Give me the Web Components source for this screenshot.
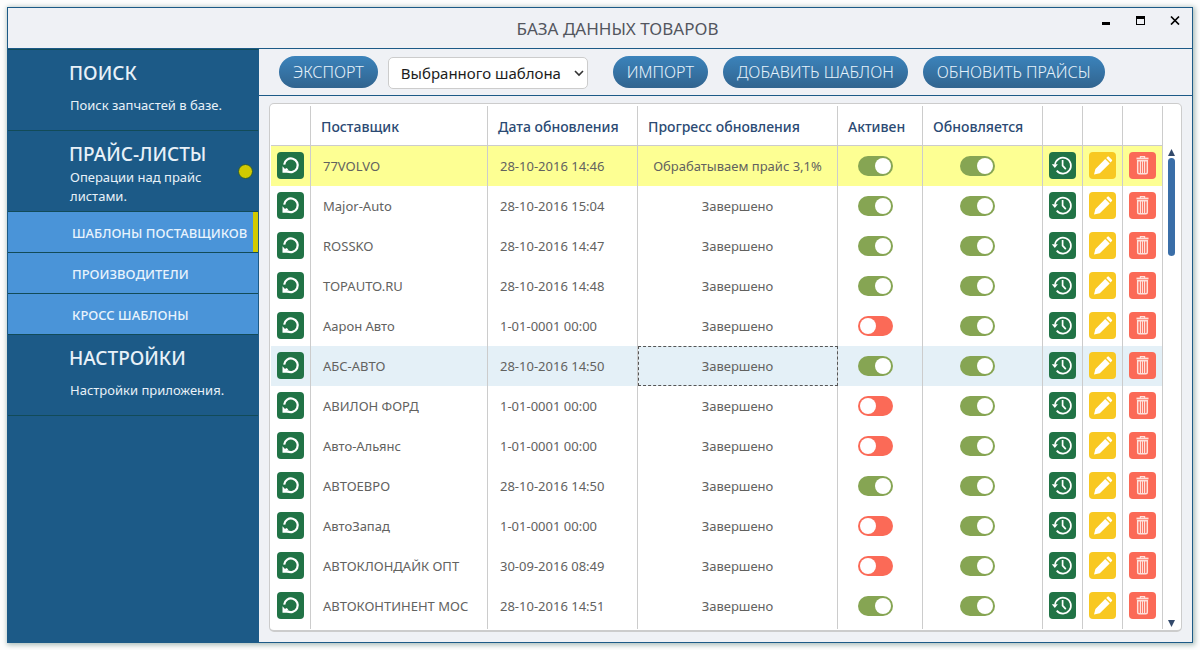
<!DOCTYPE html>
<html lang="ru">
<head>
<meta charset="utf-8">
<meta name="viewport" content="width=device-width, initial-scale=1">
<title>База данных товаров</title>
<style>
  html { background: #fdfdfd; }
  body { margin: 0; display: flex; min-height: 100vh; font-family: "Noto Sans", "Open Sans", sans-serif; }
</style>
</head>
<body>
<app-window>
  <window-title slot="title">БАЗА ДАННЫХ ТОВАРОВ</window-title>
  <side-nav slot="nav">
    <nav-section>ПОИСК<span slot="note">Поиск запчастей в базе.</span></nav-section>
    <nav-section active>ПРАЙС-ЛИСТЫ<span slot="note">Операции над прайс листами.</span></nav-section>
    <nav-item active>ШАБЛОНЫ ПОСТАВЩИКОВ</nav-item>
    <nav-item>ПРОИЗВОДИТЕЛИ</nav-item>
    <nav-item>КРОСС ШАБЛОНЫ</nav-item>
    <nav-section>НАСТРОЙКИ<span slot="note">Настройки приложения.</span></nav-section>
  </side-nav>
  <tool-bar slot="tools">
    <pill-button>ЭКСПОРТ</pill-button>
    <template-select></template-select>
    <pill-button>ИМПОРТ</pill-button>
    <pill-button>ДОБАВИТЬ ШАБЛОН</pill-button>
    <pill-button>ОБНОВИТЬ ПРАЙСЫ</pill-button>
  </tool-bar>
  <supplier-grid></supplier-grid>
</app-window>

<script>
const define = (name, markup, setup) => {
  const template = document.createElement('template');
  template.innerHTML = markup;
  customElements.define(name, class extends HTMLElement {
    constructor() {
      super();
      this.attachShadow({ mode: 'open' }).append(template.content.cloneNode(true));
    }
    connectedCallback() { if (setup) setup(this, this.shadowRoot); }
  });
};

define('app-window', `
  <style>
    :host { flex: 1; min-width: 0; margin: 7px; box-sizing: border-box; display: flex; flex-direction: column;
      border: 1px solid #1c5a87; background: #eff1f5; box-shadow: 1px 1px 5px 1px #a9bcb8; }
    .body { flex: 1; display: flex; }
    main { flex: 1; min-width: 0; display: flex; flex-direction: column; }
  </style>
  <slot name="title"></slot>
  <div class="body">
    <slot name="nav"></slot>
    <main><slot name="tools"></slot><slot></slot></main>
  </div>`);

define('window-title', `
  <style>
    :host { display: grid; grid-template-columns: 1fr auto 1fr; height: 40px; padding-left: 35px; border-bottom: 1px solid #1c5a87; }
    h1 { grid-column: 2; margin: 0; padding-top: 2px; font-size: 17px; font-weight: 400; line-height: 38px; color: #53565e; }
    .controls { display: flex; justify-content: flex-end; gap: 8px; padding: 0 4px; height: 24px; }
    button { width: 26px; height: 24px; padding: 0; border: 0; background: none; display: grid; place-items: center; }
  </style>
  <h1><slot></slot></h1>
  <div class="controls">
    <button aria-label="Свернуть"><svg width="10" height="10"><path d="M0 7h8v3H0z"/></svg></button>
    <button aria-label="Развернуть"><svg width="10" height="10"><path d="M0 1h9v9H0zM1 4v5h7V4z" fill-rule="evenodd"/></svg></button>
    <button aria-label="Закрыть"><svg width="10" height="10"><path d="M1 1.5l8 8M9 1.5l-8 8" stroke="#000" stroke-width="1.7"/></svg></button>
  </div>`);

define('side-nav', `
  <style>
    :host { display: flex; width: 250px; flex: none; background: #1c5a87; border-top: 1px solid #124b58; border-right: 1px solid #1c5a87; }
    nav { flex: 1; }
  </style>
  <nav aria-label="Разделы"><slot></slot></nav>`);

define('nav-section', `
  <style>
    :host { display: block; border-bottom: 1px solid #124b58; color: #e8f1f8; }
    a { box-sizing: border-box; height: 80px; padding: 4px 5px 4px 61px; display: flex; align-items: center; color: inherit; text-decoration: none; }
    .text { flex: 1; padding-top: 7px; }
    h2 { margin: 0; font-size: 19px; line-height: 24px; font-weight: 500; white-space: nowrap; }
    .note { display: flex; align-items: center; height: 41px; padding-left: 1px; font-size: 13px; line-height: 19px; }
    .dot { display: none; box-sizing: border-box; width: 15px; height: 15px; flex: none; border-radius: 50%; background: #d2ca00; border: 1px solid #2d5a35; }
    :host([active]) .dot { display: block; }
  </style>
  <a href="#">
    <div class="text"><h2><slot></slot></h2><div class="note"><slot name="note"></slot></div></div>
    <i class="dot"></i>
  </a>`);

define('nav-item', `
  <style>
    :host { display: block; border-bottom: 1px solid #124b58; background: #4a94d8; }
    a { box-sizing: border-box; display: block; height: 40px; padding-left: 64px; font-size: 13px; line-height: 42px;
      font-weight: 500; color: #e8f3fd; text-decoration: none; white-space: nowrap; border-right: 5px solid transparent; }
    :host([active]) a { border-color: #d2ca00; }
  </style>
  <a href="#"><slot></slot></a>`);

define('tool-bar', `
  <style>
    :host { display: flex; align-items: flex-start; gap: 15px; box-sizing: border-box; height: 47px; padding: 7px 20px 0; border-bottom: 1px solid #1c5a87; }
    ::slotted(template-select) { margin: 1px 10px 0 -5px; }
  </style>
  <slot></slot>`);

define('pill-button', `
  <style>
    :host { display: block; }
    button { height: 32px; padding: 0 14px; border: 0; border-radius: 16px; background: linear-gradient(#3b83bb, #31648f);
      color: #e6f2fb; font: 300 16px/32px "Noto Sans", "Open Sans", sans-serif; white-space: nowrap; }
  </style>
  <button type="button"><slot></slot></button>`);

define('template-select', `
  <style>
    :host { display: grid; width: 200px; }
    select, svg { grid-area: 1 / 1; }
    select { appearance: none; height: 32px; padding: 0 20px 0 12px; border: 1px solid #ccc; border-radius: 5px; background: #fff;
      color: #1c1c1c; font: 400 15px "Noto Sans", "Open Sans", sans-serif; }
    svg { justify-self: end; align-self: center; margin-right: 4px; pointer-events: none; }
  </style>
  <select aria-label="Объём экспорта"><option>Выбранного шаблона</option></select>
  <svg width="10" height="7"><path d="M1 1l4 4 4-4" fill="none" stroke="#333" stroke-width="1.6"/></svg>`);

define('toggle-switch', `
  <style>
    :host { display: block; height: 20px; }
    input { appearance: none; display: block; box-sizing: border-box; width: 35px; height: 20px; margin: 0 auto; padding: 2px; border-radius: 10px; background: #fb6a57; }
    input::before { content: ""; display: block; width: 16px; height: 16px; border-radius: 50%; background: #fff; }
    input:checked { background: #86a553; }
    input:checked::before { margin-left: auto; }
  </style>
  <input type="checkbox">`,
  (host, root) => {
    const box = root.querySelector('input');
    box.checked = host.hasAttribute('on');
    box.setAttribute('aria-label', host.getAttribute('label'));
  });

const icons = {
  refresh: ['#217346', 'Обновить', '<path d="M7.2 12.6A6.8 6.8 0 1 1 10 18.8" fill="none" stroke="#fff" stroke-width="2.2"/><path d="M5.5 14.3v6.4h6.6l-2-2 1.2-1.4-2-1.2-1.3 1z" fill="#fff"/>'],
  history: ['#217346', 'История', '<path d="M6 12.5A8 8 0 1 1 7.7 18.6" fill="none" stroke="#fff" stroke-width="1.7"/><path d="M2.8 12.2h6.1L5.8 16z" fill="#fff"/><path d="M13.6 8v5.7l3.2 3.4" fill="none" stroke="#fff" stroke-width="1.7"/>'],
  edit: ['#f8c822', 'Изменить', '<path d="M5 22.5l1.4-5.6L16.2 7l4.5 4.5-9.9 9.8zM17.2 6l1.3-1.3q.7-.7 1.4 0l3 3q.7.7 0 1.4l-1.3 1.4z" fill="#fff"/>'],
  remove: ['#fb6a57', 'Удалить', '<g fill="none" stroke="#ffe1dc"><path d="M7.5 6.5h12" stroke-width="1.8"/><path d="M11.4 6V4.6h4.2V6" stroke-width="1.2"/><path d="M8.7 8.7h9.6v11.5q0 1.5-1.4 1.5h-6.8q-1.4 0-1.4-1.5z" stroke-width="1.5"/><path d="M11.4 9v12M13.5 9v12M15.6 9v12" stroke-width="1.2"/></g>'],
};

define('icon-button', `
  <style>
    :host { display: block; height: 27px; }
    button { display: block; width: 27px; height: 27px; margin: 0 auto; padding: 0; border: 0; border-radius: 4px; }
    svg { display: block; }
  </style>
  <button type="button"></button>`,
  (host, root) => {
    const [color, label, shape] = icons[host.getAttribute('kind')];
    const button = root.querySelector('button');
    button.style.background = color;
    button.setAttribute('aria-label', label);
    button.innerHTML = `<svg width="27" height="27" viewBox="0 0 27 27">${shape}</svg>`;
  });

define('scroll-rail', `
  <style>
    :host { display: flex; flex-direction: column; align-items: center; width: 17px; flex: none; }
    button { width: 7px; height: 9px; padding: 0; border: 0; background: none; display: grid; place-items: center; }
    .track { flex: 1; }
    .thumb { width: 7px; height: 98px; margin-top: 1px; border-radius: 4px; background: #3a6ea8; }
  </style>
  <button type="button" aria-label="Вверх"><svg width="7" height="7"><path d="M0 7L3.5 0 7 7z" fill="#33496b"/></svg></button>
  <div class="track"><div class="thumb"></div></div>
  <button type="button" aria-label="Вниз"><svg width="7" height="7"><path d="M0 0L3.5 7 7 0z" fill="#33496b"/></svg></button>`);

const suppliers = [
  ['77VOLVO', '28-10-2016 14:46', 1, 'Обрабатываем прайс 3,1%', 'busy'],
  ['Major-Auto', '28-10-2016 15:04', 1],
  ['ROSSKO', '28-10-2016 14:47', 1],
  ['TOPAUTO.RU', '28-10-2016 14:48', 1],
  ['Аарон Авто', '1-01-0001 00:00', 0],
  ['АБС-АВТО', '28-10-2016 14:50', 1, 'Завершено', 'selected'],
  ['АВИЛОН ФОРД', '1-01-0001 00:00', 0],
  ['Авто-Альянс', '1-01-0001 00:00', 0],
  ['АВТОЕВРО', '28-10-2016 14:50', 1],
  ['АвтоЗапад', '1-01-0001 00:00', 0],
  ['АВТОКЛОНДАЙК ОПТ', '30-09-2016 08:49', 0],
  ['АВТОКОНТИНЕНТ МОС', '28-10-2016 14:51', 1],
];

define('supplier-grid', `
  <style>
    :host { flex: 1; display: flex; margin: 7px 10px 10px; padding: 2px 1px 0 1px; border: 1px solid #ccc; border-bottom-width: 2px; border-radius: 5px; background: #fff; }
    table { flex: 1; min-width: 0; table-layout: fixed; border-spacing: 0; align-self: flex-start; }
    .icon { width: 40px; } .name { width: 177px; } .date { width: 150px; } .active { width: 85px; } .updating { width: 120px; }
    th, td { box-sizing: border-box; border-right: 1px solid #ccc; padding: 0; height: 40px; white-space: nowrap; overflow: hidden; }
    th { border-bottom: 1px solid #ccc; padding: 1px 0 0 10px; text-align: left; font-size: 14px; font-weight: 500; color: #2b4a73; }
    td { padding: 0 0 1px; font-size: 13px; color: #62625f; }
    td.text { padding: 0 12px 1px; }
    td.progress { text-align: center; }
    td.flag { padding: 0 10px 0 0; }
    tfoot td { height: 3px; }
    .busy { background: #fdff93; }
    .selected { background: #e4f0f7; }
    .selected .progress { outline: 1px dashed #555; outline-offset: -1px; }
    scroll-rail { margin: 42px 0 2px; }
  </style>
  <table>
    <colgroup><col class="icon"><col class="name"><col class="date"><col><col class="active"><col class="updating"><col class="icon"><col class="icon"><col class="icon"></colgroup>
    <thead><tr><th></th><th>Поставщик</th><th>Дата обновления</th><th>Прогресс обновления</th><th>Активен</th><th>Обновляется</th><th></th><th></th><th></th></tr></thead>
    <tbody></tbody>
    <tfoot aria-hidden="true"><tr>${'<td></td>'.repeat(9)}</tr></tfoot>
  </table>
  <scroll-rail></scroll-rail>`,
  (host, root) => {
    root.querySelector('tbody').innerHTML = suppliers.map(([name, date, on, progress = 'Завершено', state = '']) => `
      <tr class="${state}">
        <td><icon-button kind="refresh"></icon-button></td>
        <td class="text">${name}</td>
        <td class="text">${date}</td>
        <td class="progress">${progress}</td>
        <td class="flag"><toggle-switch label="Активен" ${on ? 'on' : ''}></toggle-switch></td>
        <td class="flag"><toggle-switch label="Обновляется" on></toggle-switch></td>
        <td><icon-button kind="history"></icon-button></td>
        <td><icon-button kind="edit"></icon-button></td>
        <td><icon-button kind="remove"></icon-button></td>
      </tr>`).join('');
  });
</script>
</body>
</html>
